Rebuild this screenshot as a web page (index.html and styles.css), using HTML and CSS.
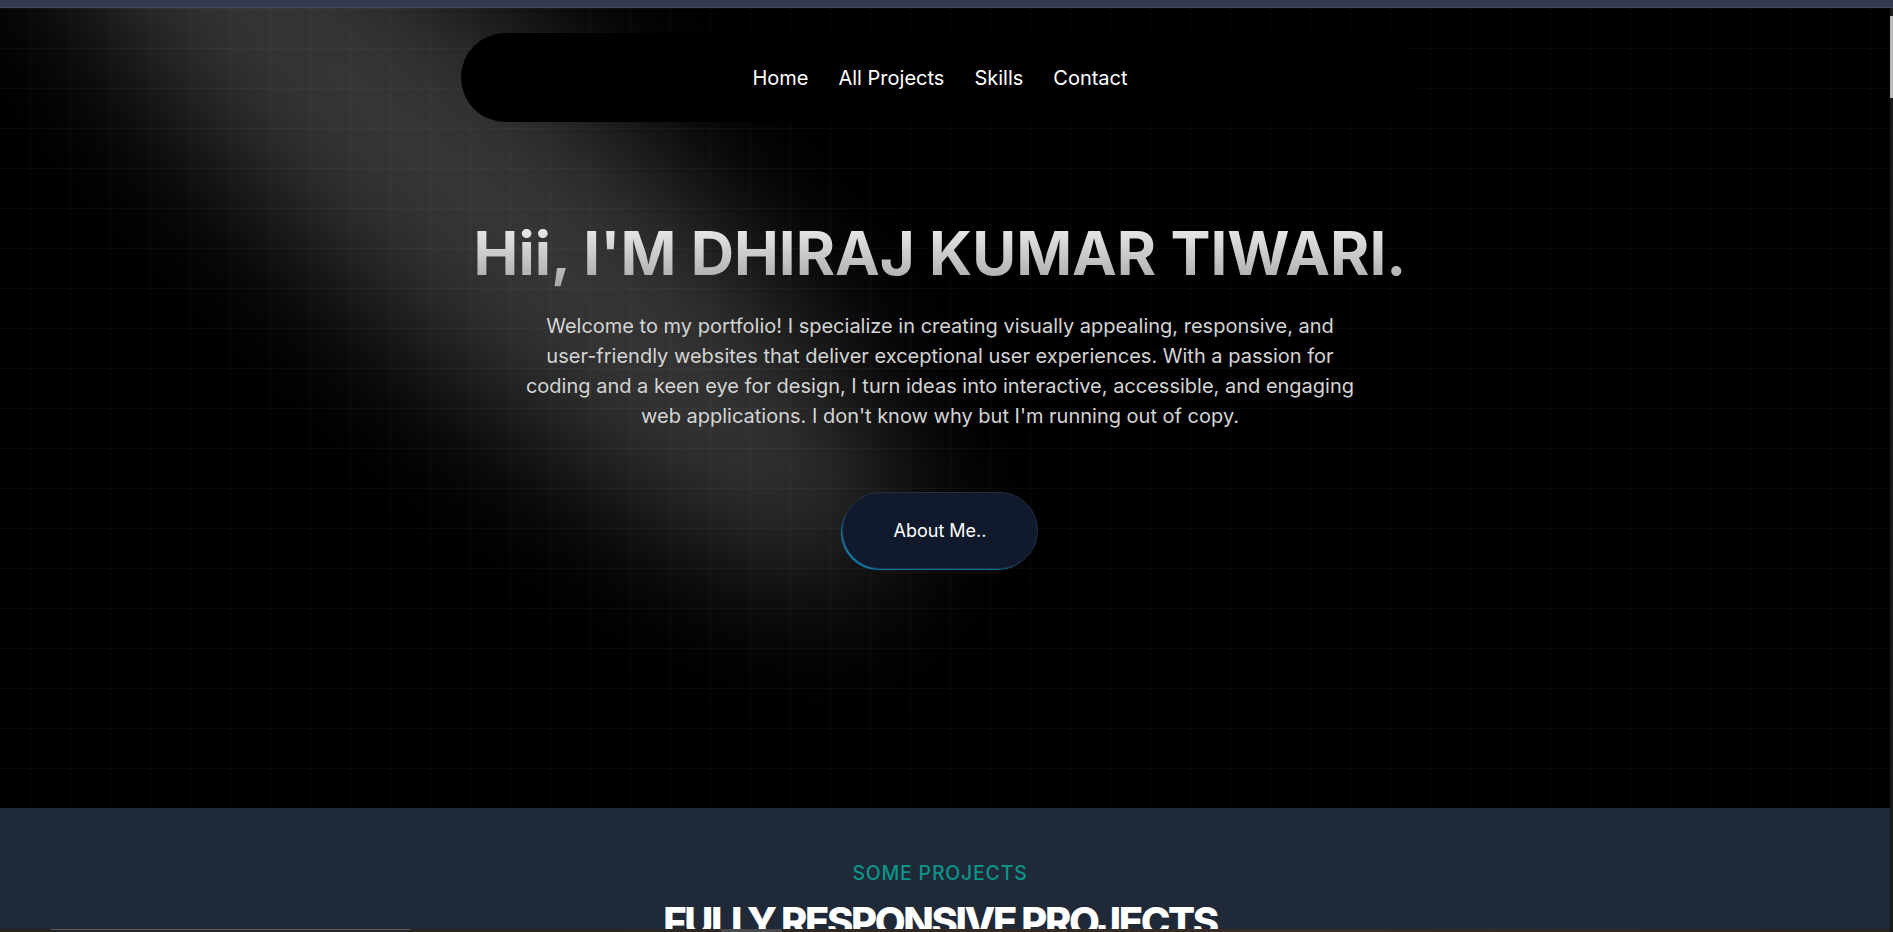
FILE: index.html
```html
<!DOCTYPE html>
<html lang="en">
<head>
<meta charset="utf-8">
<title>Dhiraj Kumar Tiwari - Portfolio</title>
<link rel="stylesheet" href="styles.css">
</head>
<body>
<div class="topbar"></div>
<main class="page">
  <section class="hero">
    <svg class="spotlight" viewBox="0 0 1890 800" preserveAspectRatio="none" aria-hidden="true">
      <defs>
        <filter id="blur" x="-50%" y="-50%" width="200%" height="200%">
          <feGaussianBlur stdDeviation="70"/>
        </filter>
      </defs>
      <ellipse cx="455" cy="170" rx="580" ry="150" transform="rotate(42 455 170)" fill="#ffffff" fill-opacity="0.21" filter="url(#blur)"/>
    </svg>
    <nav class="nav">
      <a class="nav-link" href="#">Home</a>
      <a class="nav-link" href="#">All Projects</a>
      <a class="nav-link" href="#">Skills</a>
      <a class="nav-link" href="#">Contact</a>
    </nav>
    <div class="hero-content">
      <h1 class="hero-title">Hii, I'M DHIRAJ KUMAR TIWARI.</h1>
      <p class="hero-text">Welcome to my portfolio! I specialize in creating visually appealing, responsive, and user-friendly websites that deliver exceptional user experiences. With a passion for coding and a keen eye for design, I turn ideas into interactive, accessible, and engaging web applications. I don't know why but I'm running out of copy.</p>
      <a class="about-btn" href="#">About Me..</a>
    </div>
  </section>
  <section class="projects">
    <p class="eyebrow">SOME PROJECTS</p>
    <h2 class="projects-title">FULLY RESPONSIVE PROJECTS</h2>
    <div class="gallery">
      <div class="card card-a"></div>
      <div class="card card-b"></div>
    </div>
  </section>
</main>
<div class="scrollbar"><div class="scroll-thumb"></div></div>
</body>
</html>
```
FILE: styles.css
```css
html, body {
  margin: 0;
  padding: 0;
}
body {
  background: #1f2938;
  font-family: Inter, "Noto Sans", "Liberation Sans", sans-serif;
  color: #fff;
  overflow: hidden;
  height: 932px;
}
.topbar {
  height: 7px;
  background: #333c4f;
  border-bottom: 1px solid #454d5c;
}
.page {
  width: 1890px;
}
.hero {
  position: relative;
  height: 800px;
  box-sizing: border-box;
  padding-right: 10px;
  overflow: hidden;
  background-color: #000;
  background-image:
    linear-gradient(to right, rgba(255,255,255,0.03) 1px, transparent 1px),
    linear-gradient(to bottom, rgba(255,255,255,0.03) 1px, transparent 1px);
  background-size: 40px 40px;
  background-position: 30px 0;
  display: flex;
  flex-direction: column;
  align-items: center;
}
.spotlight {
  position: absolute;
  left: 0;
  top: 0;
  width: 100%;
  height: 100%;
  pointer-events: none;
}
.nav {
  position: relative;
  margin-top: 25px;
  width: 958px;
  height: 89px;
  border-radius: 45px;
  background: #000;
  display: flex;
  align-items: center;
  justify-content: center;
  gap: 30px;
  box-sizing: border-box;
}
.nav-link {
  color: #fff;
  text-decoration: none;
  font-size: 20px;
  font-weight: 400;
}
.hero-content {
  position: relative;
  display: flex;
  flex-direction: column;
  align-items: center;
  margin-top: 95px;
}
.hero-title {
  margin: 0;
  font-size: 60px;
  font-weight: 700;
  line-height: 72px;
  background: linear-gradient(to bottom, #f5f5f5, #a3a3a3);
  -webkit-background-clip: text;
  background-clip: text;
  color: transparent;
}
.hero-text {
  margin: 22px 0 0;
  width: 840px;
  text-align: center;
  font-size: 20px;
  line-height: 30px;
  color: #d4d4d4;
}
.about-btn {
  position: relative;
  margin-top: 61px;
  width: 196px;
  height: 77px;
  box-sizing: border-box;
  border-radius: 39px;
  background: #101a2c;
  border: 1px solid #243044;
  color: #fff;
  text-decoration: none;
  font-size: 18px;
  font-weight: 400;
  display: flex;
  align-items: center;
  justify-content: center;
  box-shadow: -2px 2px 1px -1px rgba(14,165,233,0.75);
}
.projects {
  position: relative;
  box-sizing: border-box;
  padding-right: 10px;
  display: flex;
  flex-direction: column;
  align-items: center;
  padding-top: 51px;
}
.eyebrow {
  margin: 0;
  color: #0d9488;
  font-size: 19.5px;
  line-height: 28px;
  font-weight: 500;
  letter-spacing: 0.04em;
}
.projects-title {
  margin: 11px 0 0;
  font-size: 40px;
  line-height: 48px;
  font-weight: 800;
  letter-spacing: -0.06em;
  color: #fff;
}
.gallery {
  position: absolute;
  top: 121px;
  left: 0;
  right: 0;
  height: 40px;
  background: linear-gradient(90deg, #2a221d, #2e2620 40%, #3a2d24 70%, #2b231e);
}
.card {
  position: absolute;
  top: 0;
  height: 40px;
}
.card-a {
  left: 51px;
  width: 359px;
  border-top: 1px solid #5a5a5a;
  background: #262626;
}
.card-b {
  left: 721px;
  width: 61px;
  background: #4b4b4b;
}
.scrollbar {
  position: fixed;
  right: 0;
  top: 8px;
  width: 3px;
  height: 924px;
  background: #1a1a1a;
}
.scroll-thumb {
  margin-top: 8px;
  height: 82px;
  background: #b9b9b9;
}
```
